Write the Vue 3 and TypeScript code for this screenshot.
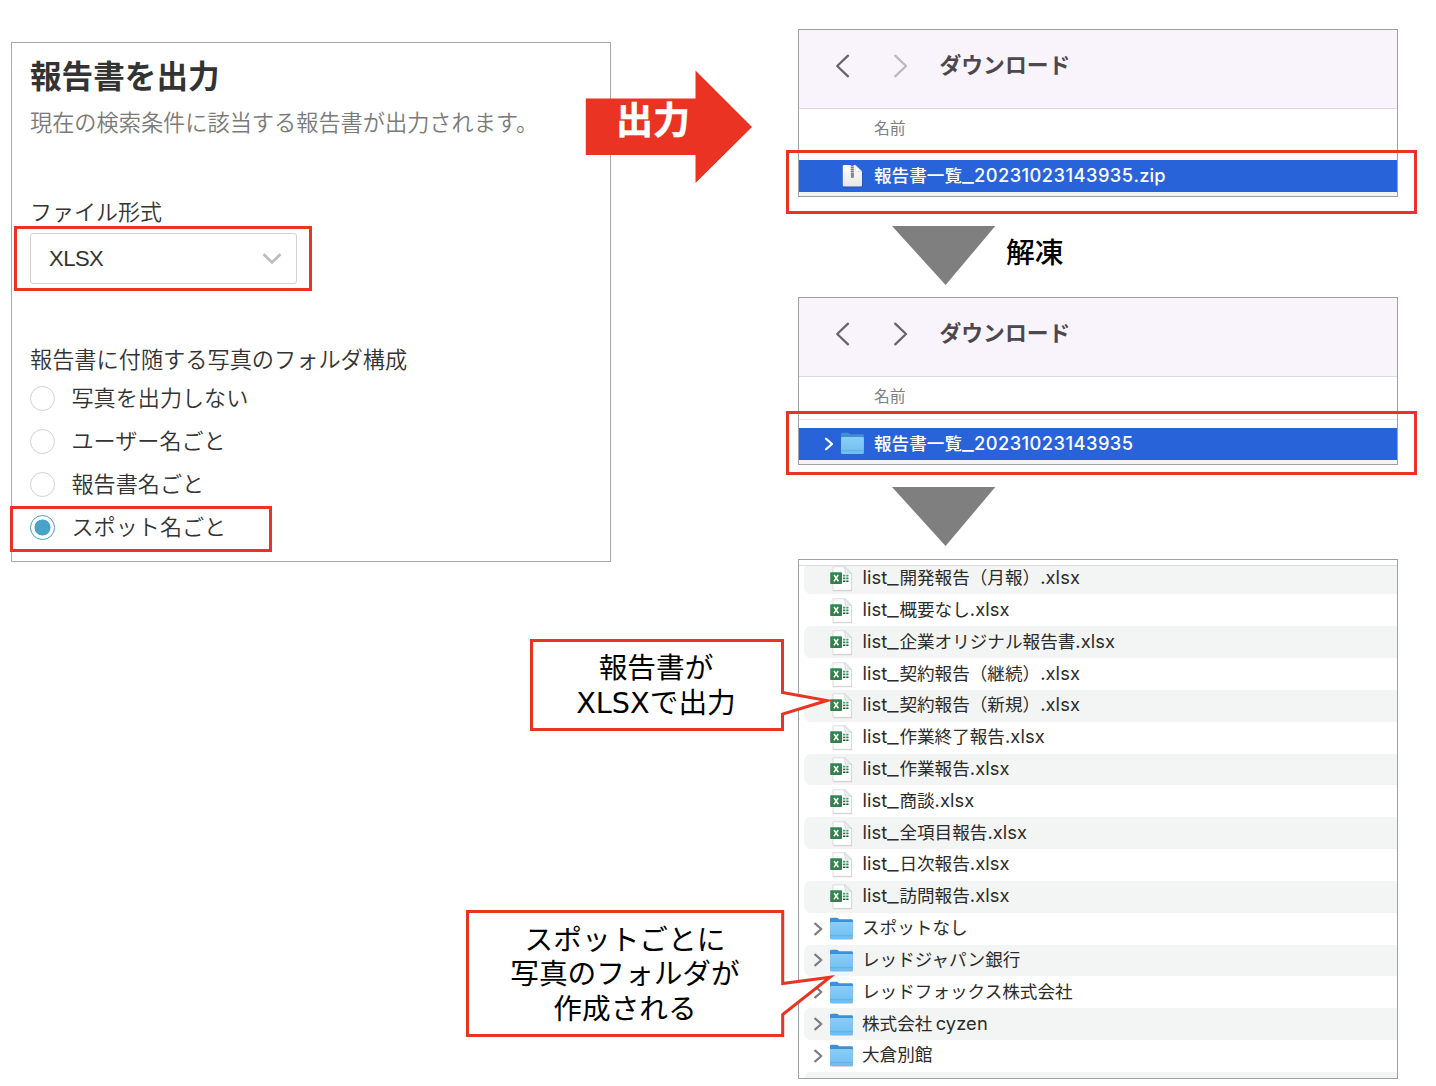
<script setup lang="ts">
interface Entry {
  name: string
  kind: 'xlsx' | 'folder'
}

interface Option {
  label: string
  checked: boolean
}

interface Run {
  text: string
  cls: 'jp' | 'latin' | 'under' | 'digits'
}

const options: Option[] = [
  { label: '写真を出力しない', checked: false },
  { label: 'ユーザー名ごと', checked: false },
  { label: '報告書名ごと', checked: false },
  { label: 'スポット名ごと', checked: true },
]

const reports: string[] = [
  '開発報告（月報）',
  '概要なし',
  '企業オリジナル報告書',
  '契約報告（継続）',
  '契約報告（新規）',
  '作業終了報告',
  '作業報告',
  '商談',
  '全項目報告',
  '日次報告',
  '訪問報告',
]

const folders: string[] = [
  'スポットなし',
  'レッドジャパン銀行',
  'レッドフォックス株式会社',
  '株式会社 cyzen',
  '大倉別館',
]

const entries: Entry[] = [
  ...reports.map((r): Entry => ({ name: `list_${r}.xlsx`, kind: 'xlsx' })),
  ...folders.map((f): Entry => ({ name: f, kind: 'folder' })),
]

// Japanese, Latin, underscore and digit runs each get their own tracking
const runs = (s: string): Run[] =>
  (s.match(/_|[0-9]+|[\x20-\x2f\x3a-\x5e\x60-\x7e]+|[^\x20-\x7e]+/g) ?? []).map((text): Run => {
    if (text === '_') return { text, cls: 'under' }
    if (/^[0-9]/.test(text)) return { text, cls: 'digits' }
    return { text, cls: /^[\x20-\x7e]/.test(text) ? 'latin' : 'jp' }
  })
</script>

<template>
  <main class="page">
    <svg class="defs" width="0" height="0" aria-hidden="true">
      <defs>
        <linearGradient id="folderFront" x1="0" y1="0" x2="0" y2="1">
          <stop offset="0" stop-color="#8bcdf8" />
          <stop offset="1" stop-color="#70bdf0" />
        </linearGradient>
        <linearGradient id="xlsGreen" x1="0" y1="0" x2="0" y2="1">
          <stop offset="0" stop-color="#2f8a50" />
          <stop offset="1" stop-color="#3b7a4c" />
        </linearGradient>
        <linearGradient id="sheet" x1="0" y1="0" x2="0" y2="1">
          <stop offset="0" stop-color="#ffffff" />
          <stop offset="1" stop-color="#e6e6e6" />
        </linearGradient>
        <symbol id="folder" viewBox="0 0 25 24">
          <rect x="1.2" y="3" width="22.8" height="19.8" rx="1.4" fill="#5a6a78" opacity=".35" />
          <path d="M1 2.2Q1 .8 2.3.8H7.6Q8.6.8 9.3 1.6L9.9 2.2H22.6Q23.9 2.2 23.9 3.5V12H1Z" fill="#3f8fd3" />
          <rect x="1" y="5" width="22.9" height="17" rx="1.3" fill="url(#folderFront)" />
          <path d="M1 18.7H23.9" stroke="#5fa9dc" stroke-width=".8" />
        </symbol>
        <symbol id="xlsx" viewBox="0 0 24 26">
          <path d="M3.2 1H16L22 7.6V24.6H3.2Z" fill="#999" opacity=".4" transform="translate(0 .7)" />
          <path d="M3 .8H15.5L21.6 7.2V24.3H3Z" fill="#fff" stroke="#cfcfcf" stroke-width=".7" />
          <path d="M14.2 1Q15.4 6 15.5 7Q19 6.7 21.6 7.6Z" fill="#efefef" stroke="#c9c9c9" stroke-width=".6" />
          <rect x=".2" y="6.3" width="11.8" height="11.8" rx=".8" fill="url(#xlsGreen)" />
          <path d="M4 9L8.4 15.3M8.2 9L3.9 15.3" stroke="#fff" stroke-width="1.5" />
          <path d="M13 9.6H15.4M16.2 9.6H18.5" stroke="#3ba86b" stroke-width="1.6" />
          <path d="M13 12.4H15.4M16.2 12.4H18.5" stroke="#2c8a53" stroke-width="1.6" />
          <path d="M13 15.2H15.4M16.2 15.2H18.5" stroke="#1f5b38" stroke-width="1.6" />
        </symbol>
      </defs>
    </svg>

    <section class="panel">
      <h1>報告書を出力</h1>
      <p class="lead">現在の検索条件に該当する報告書が出力されます。</p>
      <div class="label format">ファイル形式</div>
      <div class="select">
        <span>XLSX</span>
        <svg width="20" height="14" viewBox="0 0 20 14">
          <path d="M1.5 2.2L10 10.4L18.5 2.2" fill="none" stroke="#bdbdbd" stroke-width="2.8" />
        </svg>
      </div>
      <div class="label structure">報告書に付随する写真のフォルダ構成</div>
      <ul class="options">
        <li v-for="o in options" :key="o.label">
          <span class="radio" :class="{ on: o.checked }"></span>{{ o.label }}
        </li>
      </ul>
      <div class="mark mark-format"></div>
      <div class="mark mark-spot"></div>
    </section>

    <div class="arrow">
      <svg width="168" height="114" viewBox="0 0 168 114">
        <path d="M.8 28.5H110.5V.5L167 57L110.5 113V85H.8Z" fill="#ea3323" />
      </svg>
      <b>出力</b>
    </div>

    <section class="flow">
      <div class="finder">
        <header>
          <svg width="76" height="26" viewBox="0 0 76 26" fill="none" stroke-width="2.3" stroke-linecap="round" stroke-linejoin="round">
            <path d="M14 2.7L3.2 13L14 23.3" stroke="#6a636b" />
            <path d="M61.2 2.7L72 13L61.2 23.3" stroke="#bdb8be" />
          </svg>
          <h2>ダウンロード</h2>
        </header>
        <div class="cols">名前</div>
        <div class="selected">
          <span class="disc"></span>
          <svg class="zip" width="22" height="25" viewBox="0 0 22 25">
            <path d="M1.2 2H14L20.6 8.5V23.5H1.2Z" fill="#17408f" opacity=".5" />
            <path d="M2 1H13.2L20 7.6V21.5Q20 22.6 19 22.6H1.8Q.8 22.6.8 21.5V2Q.8 1 2 1Z" fill="url(#sheet)" />
            <path d="M13.2 1V6.6Q13.2 7.6 14.2 7.6H20Z" fill="#fff" stroke="#ccc" stroke-width=".5" />
            <path d="M10.3 1V13" stroke="#777" stroke-width="3" stroke-dasharray="1.4 .5" />
            <rect x="9" y="9" width="2.8" height="5" rx=".8" fill="#888" />
          </svg>
          <span class="name"><span v-for="r in runs('報告書一覧_20231023143935.zip')" :key="r.text" :class="r.cls">{{ r.text }}</span></span>
        </div>
        <div class="mark mark-row"></div>
      </div>

      <div class="step">
        <svg width="104" height="60" viewBox="0 0 104 60"><path d="M0 0H103.3L53.6 59Z" fill="#7f7f7f" /></svg>
        <span>解凍</span>
      </div>

      <div class="finder second">
        <header>
          <svg width="76" height="26" viewBox="0 0 76 26" fill="none" stroke-width="2.3" stroke-linecap="round" stroke-linejoin="round">
            <path d="M14 2.7L3.2 13L14 23.3" stroke="#6a636b" />
            <path d="M61.2 2.7L72 13L61.2 23.3" stroke="#6a636b" />
          </svg>
          <h2>ダウンロード</h2>
        </header>
        <div class="cols">名前</div>
        <div class="selected">
          <span class="disc">
            <svg width="10" height="14" viewBox="0 0 10 14"><path d="M2 1.7L8 7L2 12.3" fill="none" stroke="#fff" stroke-width="2.2" stroke-linecap="round" stroke-linejoin="round" /></svg>
          </span>
          <svg class="dir" width="25" height="24"><use href="#folder" /></svg>
          <span class="name"><span v-for="r in runs('報告書一覧_20231023143935')" :key="r.text" :class="r.cls">{{ r.text }}</span></span>
        </div>
        <div class="mark mark-row"></div>
      </div>

      <div class="step">
        <svg width="104" height="60" viewBox="0 0 104 60"><path d="M0 0H103.3L53.6 59Z" fill="#7f7f7f" /></svg>
      </div>

      <div class="listing">
        <div class="rows">
          <div v-for="e in entries" :key="e.name" class="row">
            <span class="disc">
              <svg v-if="e.kind === 'folder'" width="10" height="14" viewBox="0 0 10 14"><path d="M1.2 1.7L7.3 7L1.2 12.3" fill="none" stroke="#7d7d7d" stroke-width="2.2" stroke-linecap="round" stroke-linejoin="round" /></svg>
            </span>
            <svg v-if="e.kind === 'folder'" class="dir" width="25" height="24"><use href="#folder" /></svg>
            <svg v-else class="xls" width="24" height="26"><use href="#xlsx" /></svg>
            <span class="name"><span v-for="r in runs(e.name)" :key="r.text" :class="r.cls">{{ r.text }}</span></span>
          </div>
          <div class="row"></div>
        </div>
      </div>
    </section>

    <div class="callout report">
      <svg width="306" height="92" viewBox="0 0 306 92">
        <path d="M1.5 1.5H252.5V53.5L297 61.5L252.5 75V90.5H1.5Z" fill="#fff" stroke="#ea3323" stroke-width="3" stroke-miterlimit="12" />
      </svg>
      <p>報告書が<br />XLSXで出力</p>
    </div>
    <div class="callout spots">
      <svg width="376" height="128" viewBox="0 0 376 128">
        <path d="M1.5 1.5H316.7V73.5L364 67.3L316.7 104.5V125.5H1.5Z" fill="#fff" stroke="#ea3323" stroke-width="3" stroke-miterlimit="12" />
      </svg>
      <p>スポットごとに<br />写真のフォルダが<br />作成される</p>
    </div>
  </main>
</template>

<style>
body {
  background: #fff;
}
</style>

<style scoped>
* {
  box-sizing: border-box;
}
.page {
  position: relative;
  display: flex;
  align-items: flex-start;
  width: 1436px;
  height: 1086px;
  overflow: hidden;
  background: #fff;
  font-family: 'Liberation Sans', 'Noto Sans CJK JP', sans-serif;
  color: #333;
}
.defs {
  position: absolute;
}
.panel {
  position: relative;
  flex: none;
  width: 600px;
  height: 520px;
  margin: 42px 0 0 11px;
  padding: 15px 18px 0;
  border: 1px solid #a9a9a9;
}
h1 {
  margin: 0;
  font-size: 31.6px;
  line-height: 38px;
  font-weight: 700;
}
.lead {
  margin: 12px 0 0;
  font-size: 22.2px;
  line-height: 32px;
  color: #7a7a7a;
  white-space: nowrap;
  font-weight: 350;
}
.label {
  font-size: 22.2px;
  line-height: 30px;
  white-space: nowrap;
  font-weight: 350;
}
.format {
  margin-top: 58px;
  font-size: 22px;
}
.select {
  display: flex;
  align-items: center;
  justify-content: space-between;
  width: 267px;
  height: 51px;
  margin-top: 5px;
  padding: 0 14px 0 18px;
  border: 1px solid #d2d2d2;
  border-radius: 3px;
  font-size: 22px;
  letter-spacing: -0.5px;
}
.structure {
  margin-top: 62px;
}
.options {
  margin: 1px 0 0;
  padding: 0;
  list-style: none;
}
.options li {
  display: flex;
  align-items: center;
  height: 43px;
  font-size: 22.1px;
  line-height: 30px;
  font-weight: 350;
}
.radio {
  width: 25px;
  height: 25px;
  margin-right: 16.5px;
  border: 1px solid #d2d2d2;
  border-radius: 50%;
}
.radio.on {
  border: 1.5px solid #48a3ca;
  background: radial-gradient(circle, #48a3ca 7.7px, #fff 8.3px);
}
.mark {
  position: absolute;
  border: 3px solid #ea3323;
}
.mark-format {
  left: 2px;
  top: 183px;
  width: 298px;
  height: 65px;
}
.mark-spot {
  left: -2px;
  top: 463px;
  width: 262px;
  height: 46px;
}
.arrow {
  position: absolute;
  left: 585px;
  top: 70px;
  width: 168px;
  height: 114px;
}
.arrow svg {
  display: block;
}
.arrow b {
  position: absolute;
  left: 31px;
  top: 29px;
  font-size: 37px;
  line-height: 46px;
  color: #fff;
  -webkit-text-stroke: 0.5px #fff;
}
.flow {
  flex: none;
  width: 600px;
  margin: 29px 0 0 187px;
}
.finder {
  position: relative;
  height: 168px;
  border: 1px solid #a0a0a0;
  box-shadow: inset 0 -1px #ddd;
  font-family: Inter, 'Noto Sans CJK JP', sans-serif;
}
.finder header {
  display: flex;
  align-items: center;
  height: 79px;
  padding: 0 0 7px 35px;
  border-bottom: 1px solid #dcdadd;
  background: #f9f4fb;
}
.finder h2 {
  margin: 0 0 3px 29.5px;
  font-family: 'Noto Sans CJK JP', sans-serif;
  font-size: 21.8px;
  line-height: 30px;
  font-weight: 600;
  color: #4c484d;
}
.cols {
  height: 51px;
  padding: 9px 0 0 75px;
  font-family: 'Noto Sans CJK JP', sans-serif;
  font-size: 15.8px;
  line-height: 20px;
  color: #808080;
}
.second .cols {
  height: 43px;
  margin-bottom: 8px;
  border-bottom: 1px solid #e4e4e4;
}
.selected {
  display: flex;
  align-items: center;
  height: 32px;
  padding-left: 25px;
  background: #2963d9;
  color: #fff;
  font-weight: 500;
  box-shadow: 0 4px #f3f4f4;
}
.disc {
  display: flex;
  width: 18px;
}
.zip,
.dir {
  flex: none;
}
.zip {
  margin-right: 10px;
}
.selected .dir {
  margin: 0 9px 0 -2px;
}
.name {
  margin-bottom: 2px;
  font-size: 17.6px;
  line-height: 30px;
  white-space: pre;
}
.jp {
  font-family: 'Noto Sans CJK JP', sans-serif;
}
.latin {
  font-size: 18.3px;
  letter-spacing: 0.1px;
  word-spacing: -2px;
}
.digits {
  font-size: 18.3px;
  letter-spacing: 0.45px;
}
.under {
  display: inline-block;
  width: 12px;
  transform: scaleX(1.45);
  transform-origin: left;
}
.mark-row {
  left: -13px;
  top: 120px;
  width: 631px;
  height: 64px;
}
.second .mark-row {
  top: 113px;
}
.step {
  display: flex;
  height: 100px;
  padding: 29px 0 0 94px;
}
.step span {
  margin: 5px 0 0 10px;
  font-family: 'Noto Sans CJK JP', sans-serif;
  font-size: 28.8px;
  line-height: 40px;
  font-weight: 500;
  color: #000;
}
.second + .step {
  height: 94px;
  padding-top: 22px;
}
.listing {
  height: 520px;
  padding-top: 5px;
  border: 1px solid #a0a0a0;
  overflow: hidden;
  font-family: Inter, 'Noto Sans CJK JP', sans-serif;
}
.rows {
  height: 513px;
  overflow: hidden;
  border-top: 1px solid #dcdcdc;
}
.row {
  display: flex;
  align-items: center;
  height: 31.83px;
  margin-left: 5px;
  padding-left: 10px;
  border-radius: 7px 0 0 7px;
  color: #2b2b2b;
}
.row:first-child {
  margin-top: -3.4px;
}
.row:nth-child(odd) {
  background: #f3f5f5;
}
.row .disc {
  width: 15px;
  flex: none;
}
.row .dir {
  margin: 1px 8px 0 0;
}
.row .xls {
  flex: none;
  margin: 1px 8.5px 0 1px;
}
.callout {
  position: absolute;
}
.callout svg {
  display: block;
}
.callout p {
  position: absolute;
  left: 0;
  top: 0;
  margin: 0;
  text-align: center;
  font-family: 'DejaVu Sans', 'Noto Sans CJK JP', sans-serif;
  font-size: 28.7px;
  color: #000;
  white-space: nowrap;
}
.report {
  left: 530px;
  top: 639px;
}
.report p {
  top: 12px;
  width: 252px;
  line-height: 35px;
}
.spots {
  left: 466px;
  top: 910px;
}
.spots p {
  top: 12.5px;
  width: 318px;
  line-height: 34.5px;
}
</style>
